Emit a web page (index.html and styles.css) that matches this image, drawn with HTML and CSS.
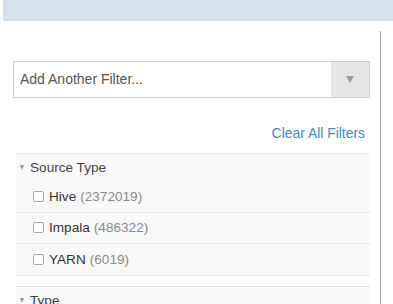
FILE: index.html
```html
<!DOCTYPE html>
<html lang="en">
<head>
<meta charset="utf-8"/>
<meta content="width=device-width, initial-scale=1.0" name="viewport"/>
<title>Filters</title>
<link rel="stylesheet" href="styles.css">
</head>
<body>
<div class="topbar"></div>
<div class="sidebar">
  <div class="filter-select">
    <span class="select-text">Add Another Filter...</span>
    <span class="select-btn"><span class="caret"></span></span>
  </div>
  <div class="clear-row"><a href="#" class="clear-link">Clear All Filters</a></div>

  <div class="group">
    <div class="group-head"><span class="tri"></span>Source Type</div>
    <label class="item"><span class="box"></span><span class="name">Hive</span> <span class="count">(2372019)</span></label>
    <label class="item"><span class="box"></span><span class="name">Impala</span> <span class="count">(486322)</span></label>
    <label class="item"><span class="box"></span><span class="name">YARN</span> <span class="count">(6019)</span></label>
  </div>

  <div class="group">
    <div class="group-head"><span class="tri"></span>Type</div>
  </div>
</div>
</body>
</html>
```

FILE: styles.css
```css
/* filter sidebar */
body {
    margin: 0;
    background-color: #fff;
    font-family: "Liberation Sans", Arial, sans-serif;
    font-size: 13.6px;
    color: #333;
    overflow: hidden;
}

.topbar {
    margin-left: 3px;
    height: 21px;
    background-color: #d4e0eb;
}

.sidebar {
    width: 357px;
    min-height: 300px;
    margin-top: 10px;
    padding: 30px 10px 0 13px;
    border-right: 1px solid #a6a6a6;
}

.filter-select {
    display: flex;
    height: 35px;
    border: 1px solid #cfcfcf;
}

.select-text {
    flex: 1;
    padding-left: 6px;
    line-height: 35px;
    color: #555;
    font-size: 14px;
}

.select-btn {
    width: 38px;
    background-color: #e6e6e6;
    display: flex;
    align-items: center;
    justify-content: center;
}

.caret {
    width: 0;
    height: 0;
    border-left: 4.5px solid transparent;
    border-right: 4.5px solid transparent;
    border-top: 7px solid #9a9a9a;
}

.clear-row {
    height: 16px;
    margin-top: 27px;
    padding-right: 5px;
    text-align: right;
    font-size: 13.9px;
    line-height: 16px;
}

.clear-link {
    color: #3b8bd3;
    text-decoration: none;
}

.group {
    margin: 12px 0 10px 3px;
    background-color: #f9f9f9;
    border-top: 1px solid #e6e6e6;
}

.group + .group {
    margin-top: 0;
}

.group-head {
    display: flex;
    align-items: center;
    height: 27px;
    padding-left: 4px;
    color: #444;
}

.tri {
    width: 0;
    height: 0;
    margin-right: 6px;
    border-left: 2.5px solid transparent;
    border-right: 2.5px solid transparent;
    border-top: 5px solid #999;
}

.item {
    display: flex;
    align-items: center;
    height: 30.5px;
    padding-left: 17px;
    border-bottom: 1px solid #e6e6e6;
}

.box {
    width: 9px;
    height: 9px;
    border: 1px solid #a8a8a8;
    border-radius: 2px;
    background-color: #fff;
    margin-right: 5px;
}

.name {
    color: #333;
}

.count {
    color: #8a8a8a;
    margin-left: 4px;
}
```
